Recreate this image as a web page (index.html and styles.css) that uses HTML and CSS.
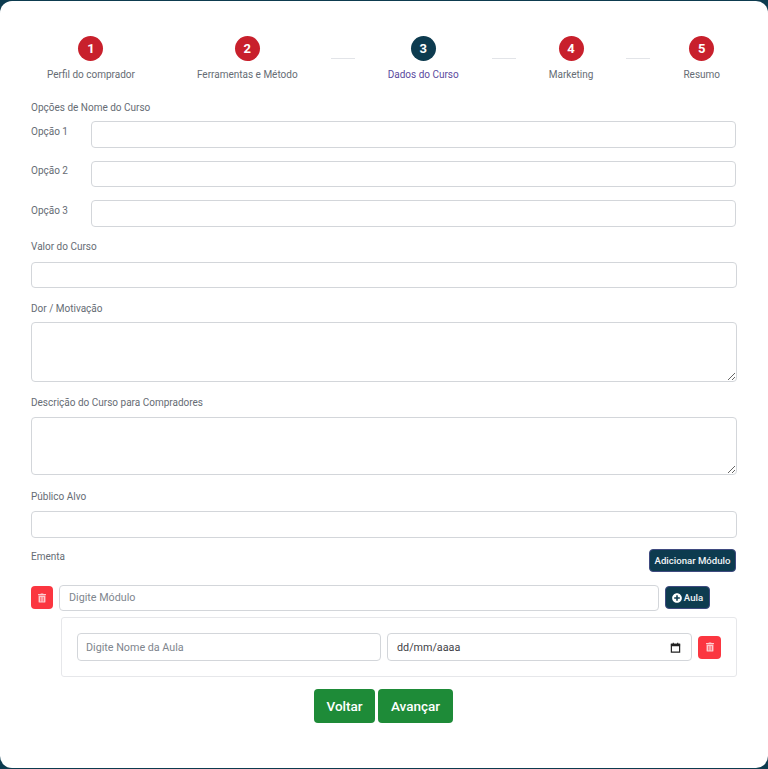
FILE: index.html
```html
<!DOCTYPE html>
<html lang="pt-BR">
<head>
<meta charset="utf-8">
<title>Dados do Curso</title>
<link rel="stylesheet" href="styles.css">
</head>
<body>
<main class="card">
  <ol class="stepper">
    <li class="step"><span class="step-num">1</span><span class="step-label">Perfil do comprador</span></li>
    <li class="step-line step-line-none"></li>
    <li class="step"><span class="step-num">2</span><span class="step-label">Ferramentas e Método</span></li>
    <li class="step-line"></li>
    <li class="step step-active"><span class="step-num">3</span><span class="step-label">Dados do Curso</span></li>
    <li class="step-line"></li>
    <li class="step"><span class="step-num">4</span><span class="step-label">Marketing</span></li>
    <li class="step-line"></li>
    <li class="step"><span class="step-num">5</span><span class="step-label">Resumo</span></li>
  </ol>

  <form class="form">
    <div class="label label-options">Opções de Nome do Curso</div>
    <div class="option-row"><label class="label option-label">Opção 1</label><input class="input" type="text"></div>
    <div class="option-row"><label class="label option-label">Opção 2</label><input class="input" type="text"></div>
    <div class="option-row"><label class="label option-label">Opção 3</label><input class="input" type="text"></div>

    <label class="label label-value">Valor do Curso</label>
    <input class="input input-full" type="text">

    <label class="label label-pain">Dor / Motivação</label>
    <textarea class="input input-full textarea-pain"></textarea>

    <label class="label label-desc">Descrição do Curso para Compradores</label>
    <textarea class="input input-full textarea-desc"></textarea>

    <label class="label label-audience">Público Alvo</label>
    <input class="input input-full" type="text">

    <div class="syllabus-head">
      <span class="label label-syllabus">Ementa</span>
      <button class="btn-dark btn-add" type="button">Adicionar Módulo</button>
    </div>

    <div class="module-row">
      <button class="btn-trash btn-trash-module" type="button" aria-label="Excluir módulo">
        <svg class="icon-trash" viewBox="0 0 448 512"><path d="M32 464a48 48 0 0 0 48 48h288a48 48 0 0 0 48-48V128H32zm272-256a16 16 0 0 1 32 0v224a16 16 0 0 1-32 0zm-96 0a16 16 0 0 1 32 0v224a16 16 0 0 1-32 0zm-96 0a16 16 0 0 1 32 0v224a16 16 0 0 1-32 0zM432 32H312l-9.4-18.7A24 24 0 0 0 281.1 0H166.8a23.72 23.72 0 0 0-21.4 13.3L136 32H16A16 16 0 0 0 0 48v32a16 16 0 0 0 16 16h416a16 16 0 0 0 16-16V48a16 16 0 0 0-16-16z"/></svg>
      </button>
      <input class="input input-module" type="text" placeholder="Digite Módulo">
      <button class="btn-dark btn-lesson" type="button">
        <svg class="icon-plus" viewBox="0 0 512 512"><path d="M256 8C119 8 8 119 8 256s111 248 248 248 248-111 248-248S393 8 256 8zm144 276c0 6.600-5.400 12-12 12h-92v92c0 6.600-5.400 12-12 12h-56c-6.600 0-12-5.400-12-12v-92h-92c-6.600 0-12-5.400-12-12v-56c0-6.600 5.400-12 12-12h92v-92c0-6.600 5.400-12 12-12h56c6.600 0 12 5.400 12 12v92h92c6.600 0 12 5.400 12 12v56z"/></svg>
        Aula
      </button>
    </div>

    <div class="lesson-panel">
      <input class="input input-lesson" type="text" placeholder="Digite Nome da Aula">
      <div class="input date-field">
        <span>dd/mm/aaaa</span>
        <svg class="icon-cal" viewBox="0 0 12 12"><path d="M1 3.500h10M1.500 2.500h9v8.500h-9z" fill="none" stroke="#222" stroke-width="1.300"/><path d="M1 2h10v2.500H1zM3 .8h1.200V2H3zM7.800 .8H9V2H7.800z" fill="#222"/></svg>
      </div>
      <button class="btn-trash" type="button" aria-label="Excluir aula">
        <svg class="icon-trash" viewBox="0 0 448 512"><path d="M32 464a48 48 0 0 0 48 48h288a48 48 0 0 0 48-48V128H32zm272-256a16 16 0 0 1 32 0v224a16 16 0 0 1-32 0zm-96 0a16 16 0 0 1 32 0v224a16 16 0 0 1-32 0zm-96 0a16 16 0 0 1 32 0v224a16 16 0 0 1-32 0zM432 32H312l-9.400-18.700A24 24 0 0 0 281.100 0H166.800a23.720 23.720 0 0 0-21.400 13.300L136 32H16A16 16 0 0 0 0 48v32a16 16 0 0 0 16 16h416a16 16 0 0 0 16-16V48a16 16 0 0 0-16-16z"/></svg>
      </button>
    </div>

    <div class="actions">
      <button class="btn-green btn-back" type="button">Voltar</button>
      <button class="btn-green btn-next" type="button">Avançar</button>
    </div>
  </form>
</main>
</body>
</html>
```

FILE: styles.css
```css
* { box-sizing: border-box; }
html, body { height: 100%; }
body {
  margin: 0;
  padding: 1px 0;
  background: #0d3b4f;
  font-family: Roboto, "Liberation Sans", sans-serif;
  color: #5f6368;
}
.card {
  height: 767px;
  background: #fff;
  border-radius: 12px;
  padding: 35px 31px 0;
  overflow: hidden;
}

/* stepper */
.stepper {
  list-style: none;
  margin: 0 0 0 16px;
  padding: 0;
  display: flex;
  gap: 33px;
}
.step {
  display: flex;
  flex-direction: column;
  align-items: center;
  gap: 7px;
}
.step-num {
  width: 25px;
  height: 25px;
  border-radius: 50%;
  background: #c8202c;
  color: #fff;
  font-size: 13px;
  font-weight: 700;
  display: flex;
  align-items: center;
  justify-content: center;
}
.step-active .step-num { background: #0d3b4f; }
.step-label {
  font-size: 10px;
  line-height: 13px;
  color: #666c74;
  white-space: nowrap;
}
.step-active .step-label { color: #5b4a9e; }
.step-line {
  width: 24px;
  height: 1px;
  margin-top: 22px;
  background: #e2e4e8;
}
.step-line-none { width: 0; margin-left: -3px; margin-right: -1px; }

/* form */
.form { display: block; }
.label {
  display: block;
  font-size: 10px;
  line-height: 13px;
  color: #666c74;
}
.input {
  display: block;
  height: 26.500px;
  width: 100%;
  border: 1px solid #d3d6da;
  border-radius: 4px;
  background: #fff;
  padding: 0 9px;
  font-family: inherit;
  font-size: 10.750px;
  color: #4a4f55;
  outline: none;
}
.input::placeholder { color: #80868e; opacity: 1; }
.input-full { width: 706px; }

.label-options { margin-top: 20px; }
.option-row {
  display: flex;
  width: 705px;
  margin-top: 13px;
}
.label-options + .option-row { margin-top: 7px; }
.option-label { width: 60px; flex: none; padding-top: 3.500px; }

.label-value { margin-top: 13px; }
.label-value + .input { margin-top: 9px; }
.label-pain { margin-top: 14px; }
.textarea-pain { height: 60px; margin-top: 7px; }
.label-desc { margin-top: 14px; }
.textarea-desc { height: 58px; margin-top: 8px; }
.label-audience { margin-top: 15px; }
.label-audience + .input { margin-top: 8px; }

.syllabus-head {
  display: flex;
  justify-content: space-between;
  align-items: flex-start;
  width: 705px;
  margin-top: 11px;
}
.label-syllabus { margin-top: 1px; }
.btn-dark {
  display: inline-flex;
  align-items: center;
  justify-content: center;
  height: 23px;
  border: 1px solid #3f4a80;
  border-radius: 4px;
  background: #0d3b4f;
  color: #f2f5f7;
  font-family: inherit;
  font-size: 9.600px;
  font-weight: 500;
  padding: 0;
}
.btn-add { width: 87px; }
.module-row {
  display: flex;
  align-items: center;
  gap: 6px;
  margin-top: 13px;
}
.btn-trash {
  flex: none;
  width: 23px;
  height: 23px;
  display: inline-flex;
  align-items: center;
  justify-content: center;
  border: 0;
  border-radius: 4px;
  background: #fb3640;
  padding: 0;
}
.btn-trash-module { width: 22px; }
.icon-trash { width: 8px; height: 10px; fill: #fff; opacity: .75; }
.input-module { width: 600px; }
.btn-lesson { width: 45px; gap: 2px; }
.icon-plus { width: 10px; height: 10px; fill: #fff; }

.lesson-panel {
  display: flex;
  align-items: center;
  gap: 6px;
  width: 676px;
  height: 60px;
  margin: 6px 0 0 30px;
  padding: 0 15px;
  border: 1px solid #e6e7ea;
  border-radius: 3px;
}
.input-lesson { width: 304px; height: 28px; padding-left: 8px; }
.date-field {
  width: 305px;
  height: 28px;
  display: flex;
  align-items: center;
  justify-content: space-between;
  color: #3f4348;
  padding-right: 10px;
}
.icon-cal { width: 11px; height: 11px; }

.actions {
  display: flex;
  justify-content: center;
  gap: 3px;
  margin-top: 12px;
  padding-right: 1px;
}
.btn-green {
  height: 34px;
  border: 0;
  border-radius: 4px;
  background: #1e8b38;
  color: #fff;
  font-family: inherit;
  font-size: 13.500px;
  font-weight: 500;
  padding: 0;
}
.btn-back { width: 61px; }
.btn-next { width: 75px; }
```
